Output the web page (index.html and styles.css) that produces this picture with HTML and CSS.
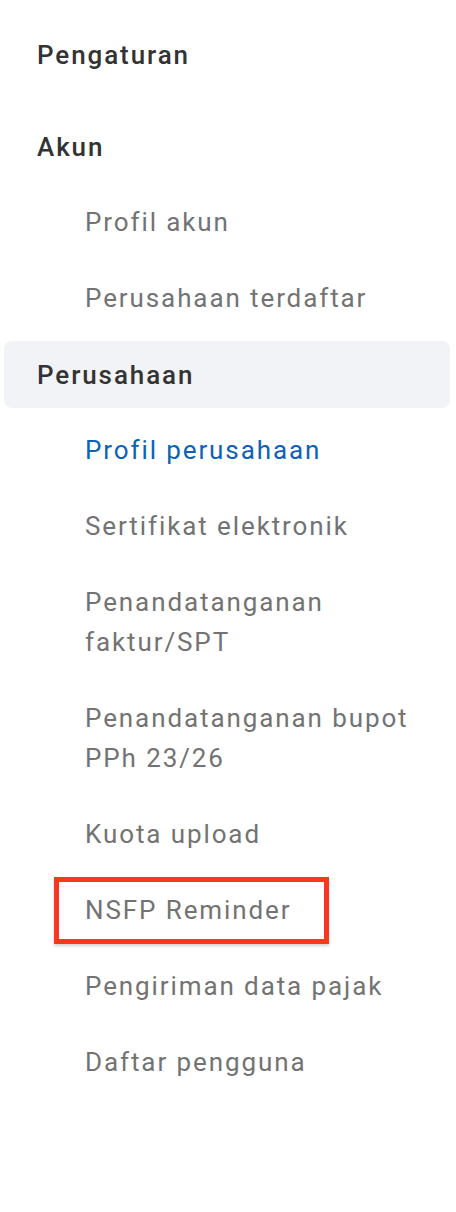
FILE: index.html
```html
<!DOCTYPE html>
<html lang="id">
<head>
<meta charset="utf-8">
<title>Pengaturan</title>
<link rel="stylesheet" href="styles.css">
</head>
<body>
<nav class="sidebar">
  <div class="title">Pengaturan</div>
  <div class="group-head">Akun</div>
  <ul class="items">
    <li class="item">Profil akun</li>
    <li class="item">Perusahaan terdaftar</li>
  </ul>
  <div class="group-head active">Perusahaan</div>
  <ul class="items">
    <li class="item current">Profil perusahaan</li>
    <li class="item">Sertifikat elektronik</li>
    <li class="item">Penandatanganan<br>faktur/SPT</li>
    <li class="item">Penandatanganan bupot<br>PPh 23/26</li>
    <li class="item">Kuota upload</li>
    <li class="item marked">NSFP Reminder</li>
    <li class="item">Pengiriman data pajak</li>
    <li class="item">Daftar pengguna</li>
  </ul>
</nav>
</body>
</html>
```

FILE: styles.css
```css
html, body {
  margin: 0;
  padding: 0;
  background: #ffffff;
}
body {
  font-family: Roboto, "Liberation Sans", Arial, sans-serif;
  width: 456px;
  height: 1212px;
  overflow: hidden;
}
.sidebar {
  margin: 0 6px 0 4px;
  display: flex;
  flex-direction: column;
}
.title {
  padding-left: 33px;
  margin-top: 35px;
  margin-bottom: 33px;
  line-height: 40px;
  font-size: 26px;
  font-weight: 500;
  color: #333333;
  letter-spacing: 1.9px;
}
.group-head {
  margin: 5px 0 4px;
  height: 67px;
  display: flex;
  align-items: center;
  padding-left: 33px;
  border-radius: 8px;
  font-size: 26px;
  font-weight: 500;
  color: #333333;
  letter-spacing: 1.9px;
}
.group-head.active {
  background: #f2f3f6;
}
.items {
  list-style: none;
  margin: 0;
  padding: 0;
}
.item {
  position: relative;
  padding: 18px 0 18px 81px;
  line-height: 40px;
  font-size: 26px;
  font-weight: 400;
  color: #737373;
  letter-spacing: 1.9px;
}
.item.current {
  color: #0d62b6;
}
.item.marked::after {
  content: "";
  position: absolute;
  left: 50px;
  top: 5px;
  width: 265px;
  height: 57px;
  border: 5px solid #f5391c;
  box-shadow: 0 2px 3px rgba(0, 0, 0, 0.18);
}
```
